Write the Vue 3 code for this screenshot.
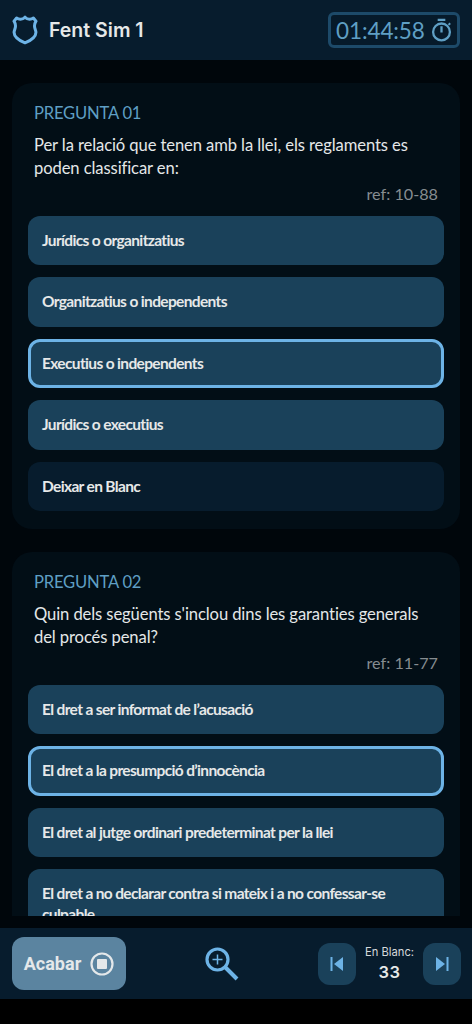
<script setup>
const questions = [
  {
    id: '01',
    text: 'Per la relació que tenen amb la llei, els reglaments es poden classificar en:',
    ref: 'ref: 10-88',
    options: [
      { label: 'Jurídics o organitzatius' },
      { label: 'Organitzatius o independents' },
      { label: 'Executius o independents', selected: true },
      { label: 'Jurídics o executius' },
      { label: 'Deixar en Blanc', blank: true },
    ],
  },
  {
    id: '02',
    text: "Quin dels següents s'inclou dins les garanties generals del procés penal?",
    ref: 'ref: 11-77',
    options: [
      { label: 'El dret a ser informat de l’acusació' },
      { label: 'El dret a la presumpció d’innocència', selected: true },
      { label: 'El dret al jutge ordinari predeterminat per la llei' },
      { label: 'El dret a no declarar contra si mateix i a no confessar-se culpable' },
      { label: 'Deixar en Blanc', blank: true },
    ],
  },
]
</script>

<template>
  <div class="screen">
    <header class="header">
      <div class="brand">
        <svg class="shield" viewBox="0 0 26 30" width="26" height="30">
          <path d="M13 2.200c1.200 1.300 2.800 2 4.600 2 1.400 0 2.700-.4 3.800-1.200l2.600 3.200c-1 1.500-1.500 3-1.500 4.800 0 2 .9 3.600 1.300 5.400.9 4.500-4 8.900-10.800 11.400C6.200 25.300 1.300 20.900 2.200 16.400c.4-1.800 1.300-3.400 1.300-5.400 0-1.800-.5-3.300-1.500-4.800L4.600 3c1.100.8 2.400 1.200 3.800 1.200 1.800 0 3.400-.7 4.600-2z" fill="none" stroke="#6db3e6" stroke-width="3" stroke-linejoin="round"/>
        </svg>
        <span class="title">Fent Sim 1</span>
      </div>
      <div class="timer">
        <span>01:44:58</span>
        <svg viewBox="0 0 22 25" width="21" height="24" fill="none" stroke="#5f9fc4" stroke-width="2.400">
          <circle cx="11" cy="14.500" r="8.800"/>
          <path d="M7 2h8M11 8.500v6.500M18.500 5.500l1.500 1.500"/>
        </svg>
      </div>
    </header>

    <div class="content">
      <main class="main">
        <section v-for="q in questions" :key="q.id" class="card">
          <div class="label">PREGUNTA {{ q.id }}</div>
          <p class="question">{{ q.text }}</p>
          <div class="ref">{{ q.ref }}</div>
          <div class="options">
            <button
              v-for="o in q.options"
              :key="o.label"
              class="option"
              :class="{ selected: o.selected, blank: o.blank }"
            >{{ o.label }}</button>
          </div>
        </section>
      </main>
    </div>

    <footer class="footer">
      <button class="finish">
        <span>Acabar</span>
        <svg viewBox="0 0 24 24" width="24" height="24">
          <circle cx="12" cy="12" r="10.500" fill="none" stroke="#e4e8ea" stroke-width="2.200"/>
          <rect x="7" y="7" width="10" height="10" rx="1" fill="#e4e8ea"/>
        </svg>
      </button>
      <svg class="zoom" viewBox="0 0 34 34" width="34" height="34" fill="none" stroke="#6db3e6">
        <circle cx="12.500" cy="12.500" r="10.500" stroke-width="3.200"/>
        <path d="M12.500 7.500v10M7.500 12.500h10" stroke-width="1.500"/>
        <path d="M20.500 20.500l11.500 11.500" stroke-width="4"/>
      </svg>
      <div class="nav">
        <button class="nav-btn">
          <svg viewBox="0 0 16 16" width="16" height="16" fill="#6db3e6">
            <rect x="1.500" y="1" width="2" height="14"/>
            <path d="M14 1v14L5 8z"/>
          </svg>
        </button>
        <div class="blank-count">
          <span class="blank-label">En Blanc:</span>
          <span class="blank-num">33</span>
        </div>
        <button class="nav-btn">
          <svg viewBox="0 0 16 16" width="16" height="16" fill="#6db3e6">
            <rect x="12.500" y="1" width="2" height="14"/>
            <path d="M2 1v14l9-7z"/>
          </svg>
        </button>
      </div>
    </footer>
  </div>
</template>

<style scoped>
.screen {
  width: 472px;
  height: 1024px;
  display: flex;
  flex-direction: column;
  background: #000;
  overflow: hidden;
  font-family: Lato, "Liberation Sans", sans-serif;
}
.header {
  height: 60px;
  flex: none;
  display: flex;
  align-items: center;
  justify-content: space-between;
  padding: 0 12px;
  background: #071c2d;
}
.brand {
  display: flex;
  align-items: center;
  gap: 11px;
}
.shield {
  display: block;
}
.title {
  font-family: Inter, sans-serif;
  font-weight: 600;
  font-size: 19.500px;
  color: #e6e8e8;
}
.timer {
  display: flex;
  align-items: center;
  gap: 6px;
  width: 132px;
  height: 36px;
  box-sizing: border-box;
  padding: 0 5px;
  border: 3px solid #1d4a69;
  border-radius: 6px;
  background: #061a2a;
  color: #5f9fc4;
  font-size: 22.500px;
  letter-spacing: -0.1px;
}
.content {
  flex: none;
  height: 868px;
  box-sizing: border-box;
  padding-bottom: 12px;
  background: #00060b;
}
.main {
  height: 856px;
  overflow: hidden;
  padding: 23px 12px 0;
  box-sizing: border-box;
  display: flex;
  flex-direction: column;
  gap: 23.500px;
}
.card {
  flex: none;
  background: #020e16;
  border-radius: 20px;
  padding: 20px 16px 17.500px;
}
.label {
  padding: 0 6px;
  color: #5f9fc4;
  font-size: 16.600px;
  line-height: 20px;
  letter-spacing: -0.2px;
}
.question {
  margin: 11px 6px 0;
  color: #e4e7e8;
  font-size: 16.600px;
  line-height: 23px;
  letter-spacing: -0.1px;
}
.ref {
  margin: 2px 6px 0;
  text-align: right;
  color: #868c90;
  font-size: 16.200px;
  line-height: 24px;
}
.options {
  margin-top: 9.500px;
  display: flex;
  flex-direction: column;
  gap: 12px;
}
.option {
  display: block;
  width: 100%;
  min-height: 49.500px;
  box-sizing: border-box;
  padding: 14px;
  border: 0;
  border-radius: 12px;
  background: #1a415a;
  color: #e6e8e8;
  font-family: inherit;
  font-size: 15.500px;
  font-weight: 700;
  line-height: 21px;
  letter-spacing: -0.65px;
  text-align: left;
}
.option.selected {
  padding: 11px;
  border: 3px solid #6db3e6;
}
.option.blank {
  background: #071c2d;
}
.footer {
  flex: none;
  height: 71px;
  display: flex;
  align-items: center;
  background: #071c2d;
  padding: 0 11px 0 12px;
}
.finish {
  width: 114px;
  height: 53px;
  display: flex;
  align-items: center;
  justify-content: center;
  gap: 9px;
  border: 0;
  border-radius: 12px;
  background: #5b84a0;
  color: #e4e8ea;
  font-family: Roboto, sans-serif;
  font-size: 18px;
  font-weight: 700;
  padding: 0;
}
.zoom {
  margin-left: 79px;
}
.nav {
  margin-left: auto;
  display: flex;
  align-items: center;
  gap: 9px;
}
.nav-btn {
  width: 38px;
  height: 42px;
  display: flex;
  align-items: center;
  justify-content: center;
  border: 0;
  padding: 0;
  border-radius: 12px;
  background: #1a415a;
}
.blank-count {
  width: 49px;
  display: flex;
  flex-direction: column;
  align-items: center;
  gap: 3px;
}
.blank-label {
  font-family: Inter, sans-serif;
  font-size: 11.200px;
  white-space: nowrap;
  color: #d5d9db;
}
.blank-num {
  font-family: Inter, sans-serif;
  font-size: 16.500px;
  font-weight: 600;
  color: #e6e8e8;
  letter-spacing: 0.5px;
}
</style>

<style>
body {
  background: #000;
}
</style>
